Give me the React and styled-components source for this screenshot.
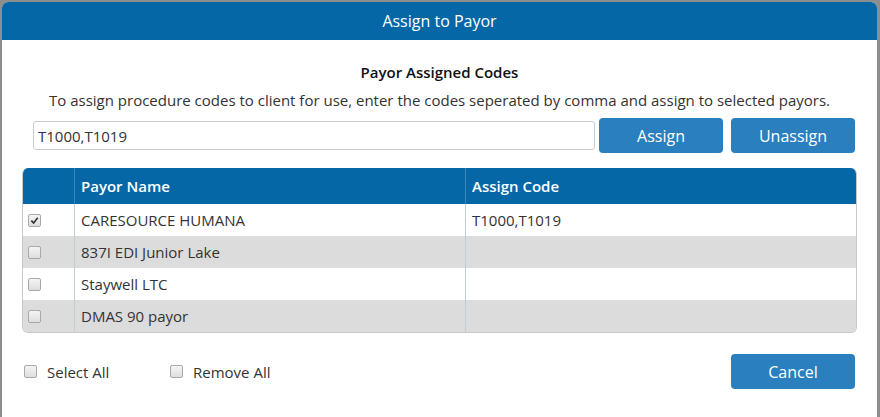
import React, { useState } from "react";
import styled, { createGlobalStyle } from "styled-components";

const GlobalStyle = createGlobalStyle`
    html, body {
        margin: 0;
        padding: 0;
        background: #8e8e8e;
        font-family: "Open Sans", "Liberation Sans", sans-serif;
        color: #333;
    }
    * { box-sizing: border-box; }
`;

const Page = styled.div`
    padding: 2px 3px 0 2px;
    height: 417px;
    overflow: hidden;
`;

const Modal = styled.div`
    background: #fff;
    border-radius: 6px 6px 0 0;
    height: 430px;
    overflow: hidden;
`;

const ModalHeader = styled.div`
    height: 38px;
    background: #0567a6;
    color: #fff;
    font-size: 16px;
    display: flex;
    align-items: center;
    justify-content: center;
`;

const ModalBody = styled.div`
    padding: 22px 20px 0 20px;
`;

const Heading = styled.div`
    text-align: center;
    font-size: 15px;
    font-weight: 600;
    color: #111;
    line-height: 20px;
`;

const Description = styled.div`
    text-align: center;
    font-size: 15px;
    color: #333;
    line-height: 20px;
    margin-top: 8px;
`;

const InputRow = styled.div`
    display: flex;
    align-items: center;
    margin: 8px 2px 0 11px;
`;

const CodeInput = styled.input`
    flex: 1;
    height: 29px;
    border: 1px solid #ccc;
    border-radius: 3px;
    padding: 0 4px;
    font-family: inherit;
    font-size: 15px;
    color: #333;
    outline: none;
`;

const Button = styled.button`
    width: 124px;
    height: 35px;
    border: none;
    border-radius: 4px;
    background: #2a7fbf;
    color: #fff;
    font-family: inherit;
    font-size: 16px;
    margin-left: ${props => props.gap || 0}px;
    cursor: pointer;
`;

const Table = styled.div`
    margin-top: 15px;
    border-radius: 6px;
    border: 1px solid #c8c8c8;
    border-top: none;
    overflow: hidden;
`;

const Row = styled.div`
    display: grid;
    grid-template-columns: 51px 391px 1fr;
    height: ${props => props.header ? 36 : 32}px;
    background: ${props => props.header ? "#0567a6" : props.odd ? "#dcdcdc" : "#fff"};
    color: ${props => props.header ? "#fff" : "#333"};
    font-weight: ${props => props.header ? 600 : 400};
    font-size: 15px;
`;

const Cell = styled.div`
    display: flex;
    align-items: center;
    padding-left: ${props => props.check ? 5 : 6}px;
    border-left: ${props => props.first ? "none" : props.head ? "1px solid #3f86b8" : "1px solid #c2cdd4"};
`;

const Box = styled.span`
    display: inline-flex;
    align-items: center;
    justify-content: center;
    width: 13px;
    height: 13px;
    border: 1px solid #a9a9a9;
    border-radius: 2px;
    background: linear-gradient(#f4f4f4, #dedede);
`;

const Footer = styled.div`
    display: flex;
    align-items: center;
    margin-top: 21px;
    padding: 0 2px 0 2px;
`;

const CheckLabel = styled.label`
    display: flex;
    align-items: center;
    font-size: 15px;
    color: #333;
    width: ${props => props.width}px;
    gap: 10px;
`;

const Spacer = styled.div`
    flex: 1;
`;

const Checkbox = ({ checked }) => (
    <Box>
        {checked && (
            <svg width="9" height="9" viewBox="0 0 10 10">
                <path d="M1.5 5.2 L4 7.8 L8.6 2" fill="none" stroke="#333" strokeWidth="1.8" />
            </svg>
        )}
    </Box>
);

const payors = [
    { name: "CARESOURCE HUMANA", code: "T1000,T1019", checked: true },
    { name: "837I EDI Junior Lake", code: "" },
    { name: "Staywell LTC", code: "" },
    { name: "DMAS 90 payor", code: "" },
];

const App = () => {
    const [codes, setCodes] = useState("T1000,T1019");

    return (
        <Page>
            <GlobalStyle />
            <Modal>
                <ModalHeader>Assign to Payor</ModalHeader>
                <ModalBody>
                    <Heading>Payor Assigned Codes</Heading>
                    <Description>
                        To assign procedure codes to client for use, enter the codes seperated by comma and assign to selected payors.
                    </Description>
                    <InputRow>
                        <CodeInput value={codes} onChange={e => setCodes(e.target.value)} />
                        <Button gap={4}>Assign</Button>
                        <Button gap={8}>Unassign</Button>
                    </InputRow>
                    <Table>
                        <Row header>
                            <Cell first />
                            <Cell head>Payor Name</Cell>
                            <Cell head>Assign Code</Cell>
                        </Row>
                        {payors.map((p, i) => (
                            <Row key={p.name} odd={i % 2 === 1}>
                                <Cell first check><Checkbox checked={p.checked} /></Cell>
                                <Cell>{p.name}</Cell>
                                <Cell>{p.code}</Cell>
                            </Row>
                        ))}
                    </Table>
                    <Footer>
                        <CheckLabel width={146}><Checkbox />Select All</CheckLabel>
                        <CheckLabel width={150}><Checkbox />Remove All</CheckLabel>
                        <Spacer />
                        <Button>Cancel</Button>
                    </Footer>
                </ModalBody>
            </Modal>
        </Page>
    );
};

export default App;
